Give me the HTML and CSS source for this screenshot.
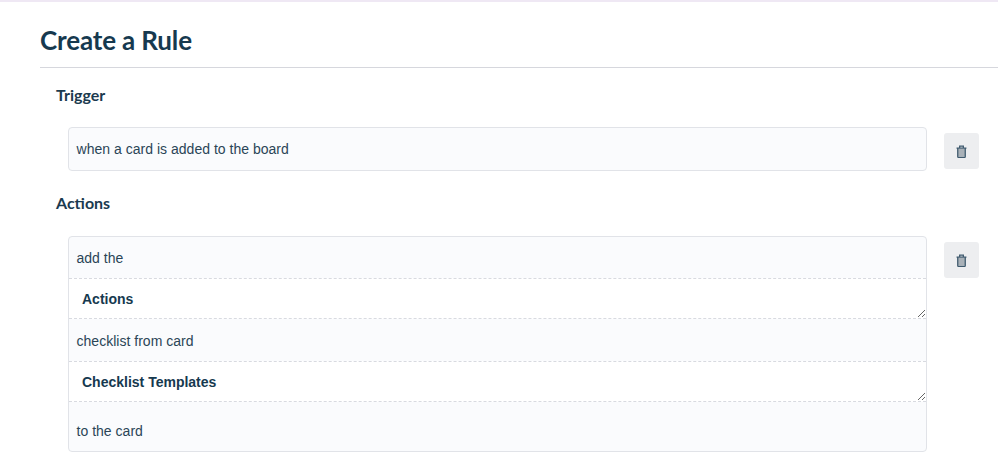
FILE: index.html
```html
<!DOCTYPE html>
<html lang="en">
<head>
<meta charset="utf-8">
<title>Create a Rule</title>
<link rel="stylesheet" href="styles.css">
</head>
<body>
<main class="page">
  <h1 class="title">Create a Rule</h1>
  <section class="section">
    <h2 class="heading heading-trigger">Trigger</h2>
    <div class="rule-row rule-row-trigger">
      <div class="box">
        <div class="text-row text-row-single">when a card is added to the board</div>
      </div>
      <button class="delete" type="button" aria-label="Delete">
        <svg class="trash" viewBox="0 0 12 14" width="11" height="13"><path class="trash-fill" d="M2 4h8v8.5H2z"/><path class="trash-line" d="M.6 3.2h10.8M4 3V1.1h4V3M1.9 3.4v9.2c0 .4.3.7.7.7h6.8c.4 0 .7-.3.7-.7V3.4"/></svg>
      </button>
    </div>
  </section>
  <section class="section">
    <h2 class="heading heading-actions">Actions</h2>
    <div class="rule-row">
      <div class="box">
        <div class="text-row text-row-a">add the</div>
        <textarea class="field field-a" rows="1" readonly>Actions</textarea>
        <div class="text-row text-row-b">checklist from card</div>
        <textarea class="field field-b" rows="1" readonly>Checklist Templates</textarea>
        <div class="text-row text-row-c">to the card</div>
      </div>
      <button class="delete" type="button" aria-label="Delete">
        <svg class="trash" viewBox="0 0 12 14" width="11" height="13"><path class="trash-fill" d="M2 4h8v8.5H2z"/><path class="trash-line" d="M.6 3.2h10.8M4 3V1.1h4V3M1.9 3.4v9.2c0 .4.3.7.7.7h6.8c.4 0 .7-.3.7-.7V3.4"/></svg>
      </button>
    </div>
  </section>
</main>
</body>
</html>
```
FILE: styles.css
```css
* { box-sizing: border-box; }
html, body { margin: 0; height: 100%; overflow: hidden; background: #fff; }
body { border-top: 2px solid #efe8f4; color: #1b3a4f; font-family: "Liberation Sans", Arial, sans-serif; }
.page { padding: 0 19px 0 40px; }
.title {
  margin: 0 -19px 0 0;
  height: 66px;
  padding-top: 21px;
  border-bottom: 1px solid #d6d7dd;
  font: 700 26px/34px "Lato", sans-serif;
  letter-spacing: -0.15px;
  color: #16394f;
}
.heading { margin: 0; padding-left: 16px; font: 700 16px/20px "Lato", sans-serif; color: #1b3a4f; }
.heading-trigger { padding-top: 17px; height: 59px; }
.heading-actions { padding-top: 22px; height: 65px; }
.rule-row { display: flex; align-items: flex-start; padding-left: 28px; gap: 17px; }
.box {
  flex: 1;
  min-width: 0;
  display: flex;
  flex-direction: column;
  border: 1px solid #e1e3e8;
  border-radius: 4px;
  background: #fafbfd;
  overflow: hidden;
}
.text-row { padding: 0 0 0 7.5px; font-size: 14px; letter-spacing: 0.02px; color: #2a4557; }
.text-row-single { height: 42px; line-height: 42px; }
.text-row-a { height: 41px; line-height: 42px; }
.text-row-b { height: 42px; line-height: 44px; }
.text-row-c { height: 49px; line-height: 58px; }
.field {
  display: block;
  width: 100%;
  height: 41px;
  margin: 0;
  padding: 12px 0 0 13px;
  border: 0;
  border-top: 1px dashed #d8dae0;
  border-bottom: 1px dashed #d8dae0;
  border-radius: 0;
  outline: 0;
  background: #fff;
  color: #16394f;
  font: 700 14px/17px "Liberation Sans", Arial, sans-serif;
  resize: vertical;
}
.delete {
  flex: none;
  display: flex;
  align-items: center;
  justify-content: center;
  width: 35px;
  height: 36px;
  margin-top: 6px;
  padding: 0;
  border: 0;
  border-radius: 3px;
  background: #edeef0;
}
.trash-fill { fill: #a9b1b8; }
.trash-line { fill: none; stroke: #3f5a6e; stroke-width: 1.4; }
```
